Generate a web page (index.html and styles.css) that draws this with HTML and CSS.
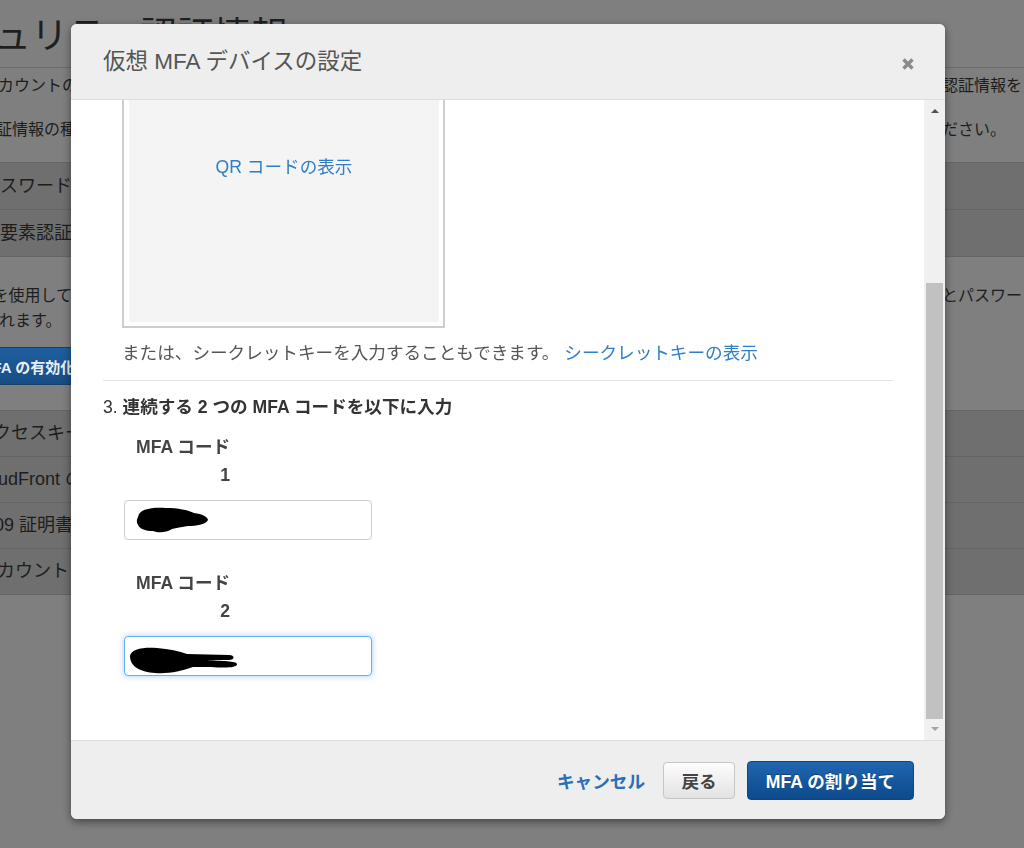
FILE: index.html
```html
<!DOCTYPE html>
<html lang="ja">
<head>
<meta charset="utf-8">
<title>仮想 MFA デバイスの設定</title>
<link rel="stylesheet" href="styles.css">
</head>
<body>
<div class="page">
  <h1 class="page-title">セキュリティ認証情報</h1>
  <div class="intro">
    <div class="line"><span class="l cut-a">アカウントのセキュリティ認証情報を管理します。</span><span class="r">認証情報を</span></div>
    <div class="line"><span class="l cut-b">認証情報の種類を選択してください。</span><span class="r">ださい。</span></div>
  </div>
  <div class="band"><span class="cut-c">パスワード</span></div>
  <div class="band"><span class="cut-c">多要素認証 (MFA)</span></div>
  <div class="section">
    <div class="sline"><span class="l cut-d">MFA を使用して AWS 環境のセキュリティを強化します。</span><span class="r">とパスワー</span></div>
    <div class="sline"><span class="l cut-e">求められます。</span></div>
    <button class="bg-btn">MFA の有効化</button>
  </div>
  <div class="band thin"><span class="cut-f">アクセスキー (アクセスキー ID とシークレットアクセスキー)</span></div>
  <div class="band thin"><span class="cut-g">CloudFront のキーペア</span></div>
  <div class="band thin"><span class="cut-h">X.509 証明書</span></div>
  <div class="band thin"><span class="cut-i">アカウント ID</span></div>
</div>

<div class="modal" role="dialog" aria-labelledby="modal-title">
  <div class="modal-header">
    <h2 class="modal-title" id="modal-title">仮想 MFA デバイスの設定</h2>
    <button class="close" aria-label="閉じる">
      <svg width="14" height="14" viewBox="0 0 14 14"><path d="M2.5 2.5 L11.5 11.5 M11.5 2.5 L2.5 11.5" stroke="#8a8a8a" stroke-width="3.4" fill="none"/></svg>
    </button>
  </div>
  <div class="modal-body">
    <div class="body-content">
      <div class="indent">
        <div class="qr-box"><div class="qr-inner"><a class="link" href="#">QR コードの表示</a></div></div>
        <p class="secret">または、シークレットキーを入力することもできます。 <a class="link" href="#">シークレットキーの表示</a></p>
      </div>
      <hr class="sep">
      <p class="step"><span class="num">3.</span> 連続する 2 つの MFA コードを以下に入力</p>
      <div class="field first">
        <label class="field-label"><span>MFA コード</span><span>1</span></label>
        <div class="input">
          <svg class="scribble" width="100" height="36" viewBox="0 0 100 36"><path d="M12 15 C 13 7, 26 5, 40 6 C 52 6, 62 8, 68 11 C 76 12, 82 15, 82 18 C 80 22, 72 24, 62 24 C 56 25, 50 26, 46 27 C 40 31, 32 31, 27 29 C 20 29, 14 27, 12 23 C 10 20, 11 17, 12 15 Z" fill="#000"/></svg>
        </div>
      </div>
      <div class="field second">
        <label class="field-label"><span>MFA コード</span><span>2</span></label>
        <div class="input focus">
          <svg class="scribble" width="130" height="40" viewBox="0 0 130 40"><path d="M5 15 C 6 8, 18 6, 32 7 C 44 8, 54 10, 62 13 L 104 14 C 110 14, 110 19, 104 19 L 82 19 C 96 20, 112 20, 112 23 C 112 27, 100 27, 86 26 L 68 26 C 56 30, 44 33, 30 32 C 16 31, 5 26, 5 15 Z" fill="#000"/></svg>
        </div>
      </div>
    </div>
    <div class="scrollbar" aria-hidden="true">
      <div class="sb-btn"><span class="tri up"></span></div>
      <div class="sb-track"><div class="sb-thumb"></div></div>
      <div class="sb-btn"><span class="tri down"></span></div>
    </div>
  </div>
  <div class="modal-footer">
    <a class="cancel" href="#">キャンセル</a>
    <button class="btn btn-default">戻る</button>
    <button class="btn btn-primary">MFA の割り当て</button>
  </div>
</div>
</body>
</html>
```

FILE: styles.css
```css
* { box-sizing: border-box; }
html, body { margin: 0; padding: 0; }
body {
  width: 1024px;
  height: 848px;
  overflow: hidden;
  background: #7f7f7f;
  font-family: "Liberation Sans", "Noto Sans CJK JP", sans-serif;
  color: #1d1d1d;
}

/* dimmed background page */
.page { width: 1024px; overflow: hidden; }
.page-title {
  margin: 0 0 0 -80px;
  height: 68px;
  padding-top: 15px;
  font-size: 37px;
  line-height: 44px;
  font-weight: 400;
  white-space: nowrap;
  color: #1f1f1f;
  border-bottom: 1px solid #6c6c6c;
}
.intro { padding-bottom: 14px; border-bottom: 1px solid #666; }
.line { display: flex; height: 36px; line-height: 36px; font-size: 16px; white-space: nowrap; overflow: hidden; }
.line + .line { margin-top: 8px; }
.l { flex: 1; overflow: hidden; }
.r { width: 82px; flex: none; overflow: hidden; }
.cut-a { margin-left: -18px; }
.cut-b { margin-left: -20px; }
.cut-d { margin-left: -44px; }
.cut-e { margin-left: -49px; }
.band {
  height: 47px;
  line-height: 46px;
  font-size: 18px;
  background: #6f6f6f;
  border-bottom: 1px solid #646464;
  white-space: nowrap;
  overflow: hidden;
}
.band.thin { height: 46px; line-height: 45px; }
.cut-c { margin-left: -18px; }
.band span { display: inline-block; }
.cut-f { margin-left: -24px; }
.cut-g { margin-left: -29px; }
.cut-h { margin-left: -33px; }
.cut-i { margin-left: -21px; }
.section { padding: 26px 0 25px; border-bottom: 1px solid #666; }
.sline { display: flex; height: 25px; line-height: 25px; font-size: 16px; white-space: nowrap; overflow: hidden; }
.bg-btn {
  display: block;
  margin: 14px 0 0 -35px;
  height: 38px;
  padding: 0 14px;
  border: 1px solid #163f6a;
  border-radius: 3px;
  background: linear-gradient(#1f5f9f, #174d84);
  color: #e9eef4;
  font-family: inherit;
  font-size: 15px;
  font-weight: 700;
}

/* modal */
.modal {
  position: fixed;
  left: 71px;
  top: 24px;
  width: 874px;
  height: 795px;
  background: #fff;
  border-radius: 6px;
  box-shadow: 0 3px 9px rgba(0, 0, 0, 0.45);
  overflow: hidden;
  display: flex;
  flex-direction: column;
}
.modal-header {
  height: 76px;
  flex: none;
  background: #eeeeee;
  border-bottom: 1px solid #dcdcdc;
  display: flex;
  align-items: center;
  padding: 0 30px 0 32px;
}
.modal-title {
  flex: 1;
  margin: 0;
  font-size: 22.5px;
  font-weight: 400;
  color: #555;
  line-height: 30px;
}
.close {
  border: 0;
  background: none;
  padding: 0;
  margin-top: 5px;
  width: 14px;
  height: 14px;
  display: flex;
}
.modal-body {
  height: 640px;
  flex: none;
  display: flex;
}
.body-content {
  flex: 1;
  overflow: hidden;
  padding: 0 31px 0 32px;
  font-size: 17.6px;
  line-height: 28px;
}
.indent { margin: -44px 0 0 19px; }
.qr-box {
  width: 323px;
  border: 2px solid #cdcdcd;
  padding: 5px 4px 4px 5px;
}
.qr-inner {
  height: 259px;
  background: #f4f4f4;
  text-align: center;
  padding-top: 90px;
}
.link { color: #2f7ec8; text-decoration: none; }
.secret { margin: 11px 0 0; color: #555; white-space: nowrap; }
.sep { margin: 13px 0 0; border: 0; border-top: 1px solid #e2e2e2; height: 0; }
.step { margin: 12px 0 0; color: #333; font-weight: 700; white-space: nowrap; }
.step .num { font-weight: 400; }
.field.first { margin-top: 12px; }
.field.second { margin-top: 29px; }
.field-label {
  display: inline-flex;
  flex-direction: column;
  align-items: flex-end;
  margin-left: 33px;
  font-weight: 700;
  color: #444;
  white-space: nowrap;
}
.input {
  margin: 11px 0 0 21px;
  width: 248px;
  height: 40px;
  border: 1px solid #cccccc;
  border-radius: 4px;
  background: #fff;
  overflow: hidden;
}
.input.focus {
  border-color: #66afe9;
  box-shadow: 0 0 6px rgba(102, 175, 233, 0.6);
}
.scribble { display: block; }
.first .scribble { margin: 1px 0 0 1px; }
.second .scribble { margin: 4px 0 0 0; }

.scrollbar {
  width: 21px;
  flex: none;
  background: #f0f0f0;
  display: flex;
  flex-direction: column;
}
.sb-btn { height: 17px; display: flex; align-items: center; justify-content: center; }
.sb-track { flex: 1; padding: 166px 2px 0 2px; }
.sb-thumb { height: 436px; background: #c1c1c1; }
.tri { width: 0; height: 0; border-left: 4px solid transparent; border-right: 4px solid transparent; }
.tri.up { border-bottom: 4px solid #505050; margin-top: 4px; }
.tri.down { border-top: 4px solid #a3a3a3; margin-top: -6px; }

.modal-footer {
  flex: 1;
  background: #eeeeee;
  border-top: 1px solid #dcdcdc;
  display: flex;
  align-items: center;
  justify-content: flex-end;
  padding: 0 31px 0 0;
}
.cancel {
  color: #2a6fb9;
  font-weight: 700;
  font-size: 17.6px;
  text-decoration: none;
  margin-right: 18px;
}
.btn {
  font-family: inherit;
  font-size: 17.6px;
  font-weight: 700;
  border-radius: 4px;
  padding: 0;
  white-space: nowrap;
}
.btn-default {
  width: 72px;
  height: 37px;
  background: linear-gradient(#fdfdfd, #e3e3e3);
  border: 1px solid #c6c6c6;
  color: #444;
  margin-right: 12px;
}
.btn-primary {
  width: 167px;
  height: 39px;
  background: linear-gradient(#1f66b1, #0c4a8b);
  border: 1px solid #0b4686;
  color: #fff;
  text-shadow: 0 -1px 0 rgba(0, 0, 0, 0.25);
}
```
